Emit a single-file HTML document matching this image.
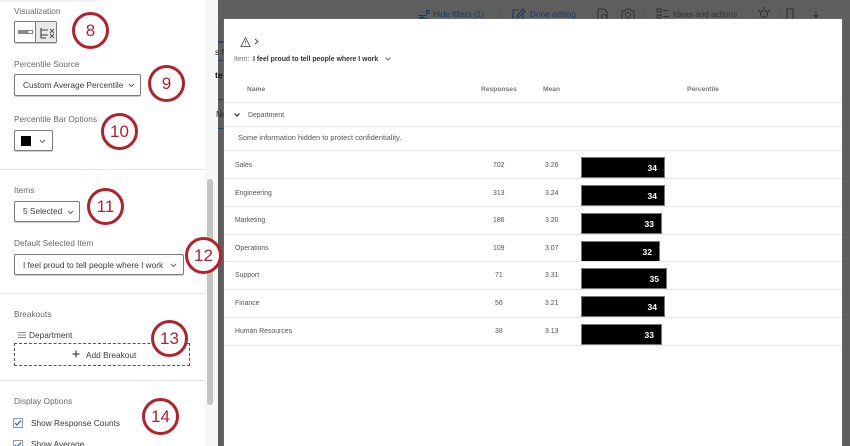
<!DOCTYPE html>
<html><head><meta charset="utf-8"><style>
html,body{margin:0;padding:0}
#p{position:relative;width:850px;height:446px;overflow:hidden;background:#5e5e5e;font-family:"Liberation Sans",sans-serif;color:#444;filter:blur(.35px)}
#p div,#p svg{position:absolute}
.t{white-space:nowrap;line-height:12px}
.l{font-size:8.3px;color:#6a6a6a}
.c{font-size:8.3px;color:#3c3c3c}
.box{box-sizing:border-box;border:1px solid #7c7c7c;border-radius:2px;background:#fff;box-shadow:0 1px 0 #ccc}
.hr{height:1px;background:#e4e4e4}
.n{width:37px;height:37px;box-sizing:border-box;border:3px solid #b5202e;border-radius:50%;background:#fff;color:#b5202e;font-size:17px;line-height:31px;text-align:center}
.row{left:224px;width:618px;height:1px;background:#e6e6e6}
.s{font-size:6.9px;color:#555;white-space:nowrap;line-height:10px}
.b{left:581px;height:19px;background:#000;border:1px solid #777;color:#fff;font-size:8.5px;font-weight:bold;line-height:20px;text-align:right}
.b span{padding-right:7px}
.h{font-size:6.7px;font-weight:bold;color:#777;white-space:nowrap;line-height:10px}
.d{font-size:8.2px;color:#1f3a5a;white-space:nowrap;line-height:12px}
</style></head><body><div id="p">

<!-- background strip -->
<div style="left:0;top:0;width:205px;height:446px;background:#fff"></div>
<div style="left:0;top:0;width:96px;height:2px;background:#f0f0f0"></div>
<div style="left:205px;top:0;width:13px;height:446px;background:#f6f7f7"></div>
<div style="left:207px;top:179px;width:6px;height:226px;background:#c4c4c4;border-radius:3px"></div>
<div style="left:218px;top:41px;width:6px;height:2px;background:#2f4257"></div>
<div style="left:218px;top:60px;width:6px;height:1px;background:#2f4257"></div>
<div style="left:218px;top:99px;width:6px;height:1px;background:#2f4257"></div>
<div style="left:218px;top:128px;width:6px;height:1px;background:#2f4257"></div>
<div class="t" style="left:215px;top:46px;width:9px;overflow:hidden;font-size:8.5px;color:#222">s f</div>
<div class="t" style="left:215px;top:69px;width:9px;overflow:hidden;font-size:8.5px;color:#111;font-weight:bold">te</div>
<div class="t" style="left:216px;top:108px;width:8px;overflow:hidden;font-size:8.5px;color:#222">No</div>

<!-- header behind the overlay -->
<svg style="left:416px;top:8px" width="16" height="12" viewBox="0 0 16 12" fill="none" stroke="#1f3a5a" stroke-width="1"><path d="M2 7.500H11M2 10.500H13"/><circle cx="6" cy="10.500" r="1.500" fill="#1f3a5a"/><rect x="10.500" y="2.500" width="2.500" height="3"/></svg>
<div class="d" style="left:433px;top:9px">Hide filters (1)</div>
<div style="left:500px;top:6px;width:1px;height:13px;background:#555"></div>
<svg style="left:511px;top:8px" width="16" height="12" viewBox="0 0 16 12" fill="none" stroke="#1f3a5a" stroke-width="1.100"><path d="M8 2H2V12M12 5V12M6 8L12 1L14 3L8 9L6 9.500Z"/></svg>
<div class="d" style="left:530px;top:9px">Done editing</div>
<svg style="left:596px;top:7px" width="40" height="12" viewBox="0 0 40 12" fill="none" stroke="#333" stroke-width="1.100"><path d="M2 12V2H8L11 5V12"/><circle cx="8" cy="10" r="2.500"/><path d="M29 4L30.500 2H34L35.500 4H38V12H26V4Z"/><circle cx="32" cy="8" r="2.500"/></svg>
<div style="left:644px;top:6px;width:1px;height:13px;background:#555"></div>
<svg style="left:656px;top:8px" width="14" height="11" viewBox="0 0 14 11" fill="none" stroke="#333" stroke-width="1.100"><rect x="1" y="1" width="4" height="3"/><rect x="1" y="7" width="4" height="3"/><path d="M7 2.500H13M7 8.500H13"/></svg>
<div class="d" style="left:673px;top:9px;color:#333">Ideas and actions</div>
<div style="left:752px;top:6px;width:1px;height:13px;background:#555"></div>
<svg style="left:757px;top:7px" width="14" height="12" viewBox="0 0 14 12" fill="none" stroke="#333" stroke-width="1.100"><circle cx="7" cy="7" r="3.500"/><path d="M1 3L3 4.500M13 3L11 4.500M7 0V2"/></svg>
<div style="left:779px;top:6px;width:1px;height:13px;background:#555"></div>
<svg style="left:785px;top:8px" width="10" height="11" viewBox="0 0 10 11" fill="none" stroke="#333" stroke-width="1.100"><path d="M2 11V1H8V11"/></svg>
<svg style="left:811px;top:11px" width="10" height="9" viewBox="0 0 10 9" fill="none" stroke="#333" stroke-width="1.100"><path d="M5 0V6M3 4L5 6.500L7 4"/></svg>

<!-- sidebar -->
<div class="t l" style="left:14px;top:5px">Visualization</div>
<div class="box" style="left:14px;top:21px;width:43px;height:22px"></div>
<div style="left:35px;top:22px;width:20px;height:20px;background:#e9e9e9;border-left:1px solid #7c7c7c"></div>
<svg style="left:17px;top:22px" width="40" height="20" viewBox="0 0 40 20" fill="none"><rect x="1.500" y="8.500" width="14" height="3" fill="#fff" stroke="#888"/><rect x="1.500" y="8.500" width="10" height="3" fill="#888"/><path d="M24 6V16H29M24 8H31M24 13H31" stroke="#444" stroke-width="1.100"/><path d="M33 7L37 11M37 7L33 11M33 12L37 16M37 12L33 16" stroke="#555" stroke-width="1"/></svg>
<div class="n" style="left:72px;top:12px">8</div>

<div class="t l" style="left:14px;top:58px">Percentile Source</div>
<div class="box" style="left:14px;top:74px;width:127px;height:22px"></div>
<div class="t c" style="left:23px;top:79px">Custom Average Percentile</div>
<svg style="left:128px;top:83px" width="7" height="5" viewBox="0 0 7 5" fill="none" stroke="#666"><path d="M1 1L3.500 3.500L6 1"/></svg>
<div class="n" style="left:148px;top:65px">9</div>

<div class="t l" style="left:14px;top:113px">Percentile Bar Options</div>
<div class="box" style="left:14px;top:130px;width:39px;height:21px"></div>
<div style="left:21px;top:136px;width:10px;height:10px;background:#000"></div>
<svg style="left:39px;top:139px" width="7" height="5" viewBox="0 0 7 5" fill="none" stroke="#666"><path d="M1 1L3.500 3.500L6 1"/></svg>
<div class="n" style="left:101px;top:113px">10</div>

<div class="hr" style="left:0;top:169px;width:205px"></div>

<div class="t l" style="left:14px;top:184px">Items</div>
<div class="box" style="left:14px;top:201px;width:66px;height:21px"></div>
<div class="t c" style="left:23px;top:205px">5 Selected</div>
<svg style="left:67px;top:210px" width="7" height="5" viewBox="0 0 7 5" fill="none" stroke="#666"><path d="M1 1L3.500 3.500L6 1"/></svg>
<div class="n" style="left:87px;top:188px">11</div>

<div class="t l" style="left:14px;top:237px">Default Selected Item</div>
<div class="box" style="left:14px;top:254px;width:170px;height:21px"></div>
<div class="t c" style="left:23px;top:259px">I feel proud to tell people where I work</div>
<svg style="left:170px;top:263px" width="7" height="5" viewBox="0 0 7 5" fill="none" stroke="#666"><path d="M1 1L3.500 3.500L6 1"/></svg>
<div class="n" style="left:185px;top:237px">12</div>

<div class="hr" style="left:0;top:293px;width:205px"></div>

<div class="t l" style="left:14px;top:308px">Breakouts</div>
<svg style="left:18px;top:331px" width="8" height="8" viewBox="0 0 8 8" fill="none" stroke="#888"><path d="M0 1.500H8M0 4H8M0 6.500H8"/></svg>
<div class="t c" style="left:29px;top:329px">Department</div>
<div style="left:14px;top:343px;width:176px;height:23px;box-sizing:border-box;border:1px dashed #555"></div>
<svg style="left:71px;top:349px" width="10" height="10" viewBox="0 0 10 10" fill="none" stroke="#444" stroke-width="1.200"><path d="M5 1.500V8.500M1.500 5H8.500"/></svg>
<div class="t c" style="left:86px;top:349px">Add Breakout</div>
<div class="n" style="left:151px;top:320px">13</div>

<div class="hr" style="left:0;top:380px;width:205px"></div>

<div class="t l" style="left:14px;top:395px">Display Options</div>
<div style="left:13px;top:418px;width:10px;height:10px;box-sizing:border-box;border:1px solid #8a9ab0;background:#fff"></div>
<svg style="left:14px;top:419px" width="8" height="8" viewBox="0 0 8 8" fill="none" stroke="#1f6fd0" stroke-width="1.300"><path d="M1 4L3 6L7 1.500"/></svg>
<div class="t c" style="left:31px;top:417px">Show Response Counts</div>
<div style="left:13px;top:440px;width:10px;height:10px;box-sizing:border-box;border:1px solid #8a9ab0;background:#fff"></div>
<svg style="left:14px;top:441px" width="8" height="8" viewBox="0 0 8 8" fill="none" stroke="#1f6fd0" stroke-width="1.300"><path d="M1 4L3 6L7 1.500"/></svg>
<div class="t c" style="left:31px;top:438px">Show Average</div>
<div class="n" style="left:142px;top:398px">14</div>

<!-- modal -->
<div style="left:224px;top:19px;width:618px;height:427px;background:#fff;box-shadow:0 0 1px #999"></div>
<svg style="left:240px;top:36px" width="20" height="12" viewBox="0 0 20 12" fill="none" stroke="#666"><path d="M5.500 1.500L10 10.500H1Z"/><path d="M5.500 4.500V7.500M5.500 8.500V9.500" stroke-width=".8"/><path d="M15 3L18 5.500L15 8" stroke="#444"/></svg>
<div class="s" style="left:234px;top:55px;color:#777">Item:</div>
<div class="s" style="left:253px;top:55px;font-weight:bold;color:#333">I feel proud to tell people where I work</div>
<svg style="left:385px;top:57px" width="6" height="4" viewBox="0 0 6 4" fill="none" stroke="#666"><path d="M.5 .5L3 3L5.500 .5"/></svg>

<div class="h" style="left:247px;top:85px">Name</div>
<div class="h" style="left:481px;top:85px">Responses</div>
<div class="h" style="left:543px;top:85px">Mean</div>
<div class="h" style="left:687px;top:85px">Percentile</div>
<div class="row" style="top:102px"></div>
<svg style="left:234px;top:113px" width="6" height="4" viewBox="0 0 6 4" fill="none" stroke="#333" stroke-width="1.200"><path d="M.5 .5L3 3L5.500 .5"/></svg>
<div class="s" style="left:248px;top:111px">Department</div>
<div class="row" style="top:126px"></div>
<div class="s" style="left:238px;top:133px;font-size:7.4px">Some information hidden to protect confidentiality.</div>
<div class="row" style="top:150px"></div>

<div class="s" style="left:235px;top:161px">Sales</div><div class="s" style="left:493px;top:161px">702</div><div class="s" style="left:545px;top:161px">3.26</div>
<div class="b" style="top:157px;width:82px"><span>34</span></div>
<div class="row" style="top:178px"></div>

<div class="s" style="left:235px;top:189px">Engineering</div><div class="s" style="left:493px;top:189px">313</div><div class="s" style="left:545px;top:189px">3.24</div>
<div class="b" style="top:185px;width:82px"><span>34</span></div>
<div class="row" style="top:206px"></div>

<div class="s" style="left:235px;top:216px">Marketing</div><div class="s" style="left:493px;top:216px">186</div><div class="s" style="left:545px;top:216px">3.20</div>
<div class="b" style="top:213px;width:79px"><span>33</span></div>
<div class="row" style="top:234px"></div>

<div class="s" style="left:235px;top:244px">Operations</div><div class="s" style="left:493px;top:244px">109</div><div class="s" style="left:545px;top:244px">3.07</div>
<div class="b" style="top:241px;width:77px"><span>32</span></div>
<div class="row" style="top:261px"></div>

<div class="s" style="left:235px;top:271px">Support</div><div class="s" style="left:495px;top:271px">71</div><div class="s" style="left:545px;top:271px">3.31</div>
<div class="b" style="top:268px;width:84px"><span>35</span></div>
<div class="row" style="top:289px"></div>

<div class="s" style="left:235px;top:299px">Finance</div><div class="s" style="left:495px;top:299px">56</div><div class="s" style="left:545px;top:299px">3.21</div>
<div class="b" style="top:296px;width:82px"><span>34</span></div>
<div class="row" style="top:317px"></div>

<div class="s" style="left:235px;top:327px">Human Resources</div><div class="s" style="left:495px;top:327px">38</div><div class="s" style="left:545px;top:327px">3.13</div>
<div class="b" style="top:324px;width:79px"><span>33</span></div>
<div class="row" style="top:345px"></div>

</div></body></html>
